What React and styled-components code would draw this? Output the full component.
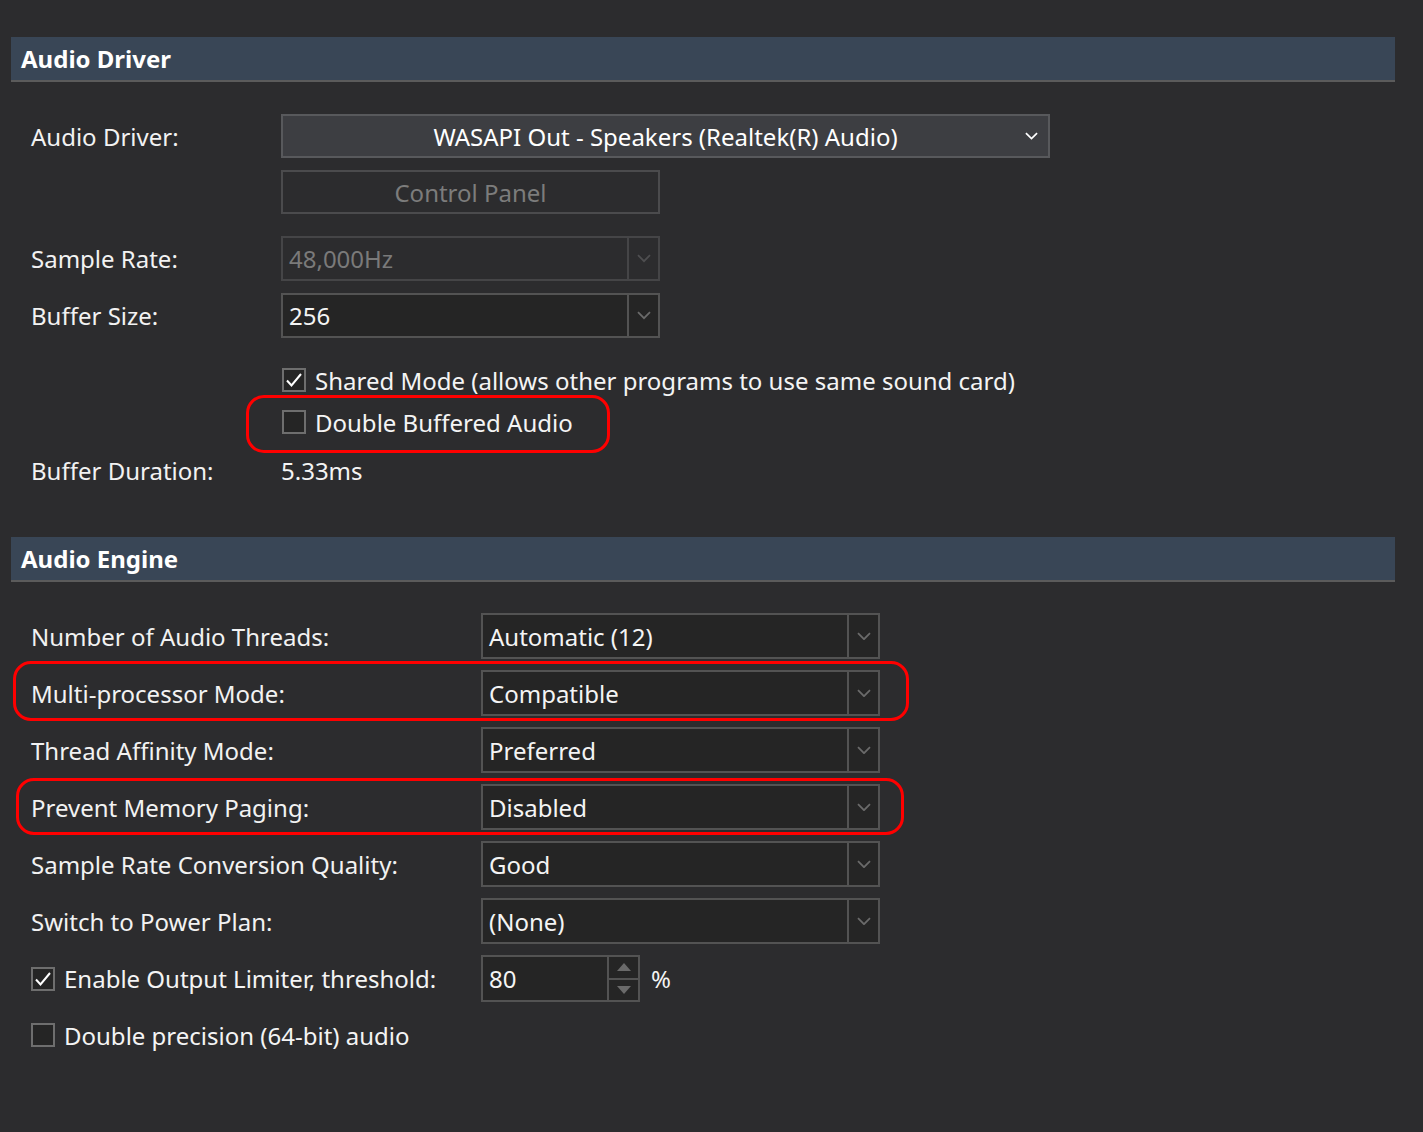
import styled, { createGlobalStyle } from "styled-components";

const Global = createGlobalStyle`
  html, body {
    margin: 0;
    padding: 0;
    background: #2c2c2e;
  }
  body {
    font-family: "Noto Sans", "Open Sans", sans-serif;
    color: #f2f2f2;
  }
`;

const Page = styled.div`
  width: 1423px;
  height: 1132px;
  padding: 37px 28px 0 11px;
  box-sizing: border-box;
  background: #2c2c2e;
`;

const SectionHeader = styled.div`
  height: 43px;
  margin-top: ${(p) => p.$mt || 0}px;
  background: #394656;
  border-bottom: 2px solid #5b5b5b;
  display: flex;
  align-items: center;
  padding-left: 10px;
  font-size: 24px;
  font-weight: 700;
  color: #ffffff;
`;

const Form = styled.div`
  display: flex;
  flex-direction: column;
`;

const Row = styled.div`
  position: relative;
  display: flex;
  align-items: center;
  height: ${(p) => p.$h || 44}px;
  margin-top: ${(p) => p.$mt || 0}px;
  padding-left: 20px;
`;

const Label = styled.div`
  width: ${(p) => p.$w}px;
  flex-shrink: 0;
  display: flex;
  align-items: center;
  font-size: 24px;
  color: #f2f2f2;
`;

const DriverSelect = styled.div`
  width: 769px;
  height: 100%;
  box-sizing: border-box;
  background: #3d3e42;
  border: 2px solid #58595c;
  display: flex;
  align-items: center;
  font-size: 24px;
  color: #ffffff;
  position: relative;
  justify-content: center;
  svg {
    position: absolute;
    right: 10px;
  }
`;

const Button = styled.div`
  width: 379px;
  height: 100%;
  box-sizing: border-box;
  border: 2px solid #4b4b4d;
  display: flex;
  align-items: center;
  justify-content: center;
  font-size: 24px;
  color: #7c7c7c;
`;

const Combo = styled.div`
  width: ${(p) => p.$w}px;
  height: 100%;
  box-sizing: border-box;
  display: flex;
  border: 2px solid ${(p) => (p.$disabled ? "#454547" : "#535353")};
  background: ${(p) => (p.$disabled ? "#2c2c2e" : "#252525")};
`;

const ComboText = styled.div`
  flex: 1;
  display: flex;
  align-items: center;
  padding-left: 6px;
  font-size: 24px;
  color: ${(p) => (p.$disabled ? "#7a7a7a" : "#f4f4f4")};
`;

const ComboArrow = styled.div`
  width: 29px;
  border-left: 2px solid ${(p) => (p.$disabled ? "#454547" : "#535353")};
  display: flex;
  align-items: center;
  justify-content: center;
`;

const SpinArrows = styled.div`
  width: 29px;
  border-left: 2px solid #535353;
  display: flex;
  flex-direction: column;
`;

const SpinHalf = styled.div`
  flex: 1;
  display: flex;
  align-items: center;
  justify-content: center;
  & + & {
    border-top: 2px solid #535353;
  }
`;

const Check = styled.div`
  width: 24px;
  height: 24px;
  box-sizing: border-box;
  border: 2px solid #6e6e6e;
  background: #252525;
  display: flex;
  align-items: center;
  justify-content: center;
  flex-shrink: 0;
  margin-right: 9px;
`;

const CheckText = styled.span`
  font-size: 24px;
  color: #f4f4f4;
`;

const Unit = styled.span`
  font-size: 24px;
  margin-left: 11px;
  color: #f4f4f4;
`;

const Value = styled.span`
  font-size: 24px;
  color: #f4f4f4;
`;

const Highlight = styled.div`
  position: absolute;
  border: 3px solid #ff0000;
  border-radius: 18px;
  pointer-events: none;
  left: ${(p) => p.$l}px;
  top: ${(p) => p.$t}px;
  width: ${(p) => p.$w}px;
  height: ${(p) => p.$h}px;
  box-sizing: border-box;
`;

const Chevron = ({ color = "#6a6a6a", w = 14 }) => (
  <svg width={w} height={w * 0.6} viewBox="0 0 14 8" fill="none">
    <path d="M1 1l6 6 6-6" stroke={color} strokeWidth="1.8" />
  </svg>
);

const Tick = () => (
  <svg width="18" height="16" viewBox="0 0 18 16" fill="none">
    <path d="M2 8.5l4.5 5L16 2" stroke="#ffffff" strokeWidth="2" />
  </svg>
);

const Tri = ({ up }) => (
  <svg width="14" height="8" viewBox="0 0 14 8">
    <path d={up ? "M7 0L14 8H0z" : "M0 0h14L7 8z"} fill="#6a6a6a" />
  </svg>
);

function Select({ value, w = 399, disabled }) {
  return (
    <Combo $w={w} $disabled={disabled}>
      <ComboText $disabled={disabled}>{value}</ComboText>
      <ComboArrow $disabled={disabled}>
        <Chevron color={disabled ? "#4e4e50" : "#6a6a6a"} />
      </ComboArrow>
    </Combo>
  );
}

function CheckBox({ checked, children }) {
  return (
    <>
      <Check>{checked && <Tick />}</Check>
      <CheckText>{children}</CheckText>
    </>
  );
}

const engineRows = [
  { label: "Number of Audio Threads:", value: "Automatic (12)" },
  { label: "Multi-processor Mode:", value: "Compatible", mark: { l: 2, t: -9, w: 896, h: 60 } },
  { label: "Thread Affinity Mode:", value: "Preferred" },
  { label: "Prevent Memory Paging:", value: "Disabled", mark: { l: 5, t: -6, w: 888, h: 57 } },
  { label: "Sample Rate Conversion Quality:", value: "Good" },
  { label: "Switch to Power Plan:", value: "(None)" },
];

export default function App() {
  return (
    <Page>
      <Global />
      <SectionHeader>Audio Driver</SectionHeader>
      <Form>
        <Row $mt={32} $h={44}>
          <Label $w={250}>Audio Driver:</Label>
          <DriverSelect>
            WASAPI Out - Speakers (Realtek(R) Audio)
            <Chevron color="#ffffff" w={13} />
          </DriverSelect>
        </Row>
        <Row $mt={12} $h={44}>
          <Label $w={250} />
          <Button>Control Panel</Button>
        </Row>
        <Row $mt={22} $h={45}>
          <Label $w={250}>Sample Rate:</Label>
          <Select value="48,000Hz" w={379} disabled />
        </Row>
        <Row $mt={12} $h={45}>
          <Label $w={250}>Buffer Size:</Label>
          <Select value="256" w={379} />
        </Row>
        <Row $mt={21} $h={42}>
          <Label $w={251} />
          <CheckBox checked>Shared Mode (allows other programs to use same sound card)</CheckBox>
        </Row>
        <Row $h={42}>
          <Label $w={251} />
          <CheckBox>Double Buffered Audio</CheckBox>
          <Highlight $l={235} $t={-6} $w={364} $h={58} />
        </Row>
        <Row $mt={6} $h={42}>
          <Label $w={250}>Buffer Duration:</Label>
          <Value>5.33ms</Value>
        </Row>
      </Form>

      <SectionHeader $mt={46}>Audio Engine</SectionHeader>
      <Form>
        {engineRows.map((r, i) => (
          <Row key={r.label} $mt={i === 0 ? 31 : 11} $h={46}>
            <Label $w={450}>{r.label}</Label>
            <Select value={r.value} />
            {r.mark && <Highlight $l={r.mark.l} $t={r.mark.t} $w={r.mark.w} $h={r.mark.h} />}
          </Row>
        ))}
        <Row $mt={11} $h={47}>
          <Label $w={450}>
            <CheckBox checked>Enable Output Limiter, threshold:</CheckBox>
          </Label>
          <Combo $w={159}>
            <ComboText>80</ComboText>
            <SpinArrows>
              <SpinHalf>
                <Tri up />
              </SpinHalf>
              <SpinHalf>
                <Tri />
              </SpinHalf>
            </SpinArrows>
          </Combo>
          <Unit>%</Unit>
        </Row>
        <Row $mt={10} $h={46}>
          <CheckBox>Double precision (64-bit) audio</CheckBox>
        </Row>
      </Form>
    </Page>
  );
}
